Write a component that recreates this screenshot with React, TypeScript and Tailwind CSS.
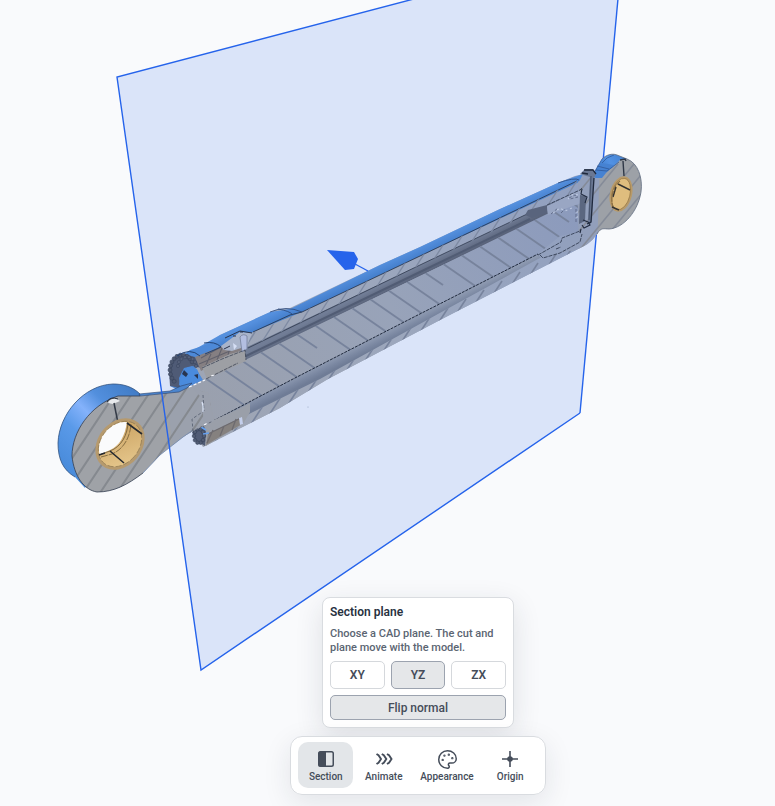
import { useState } from "react";
import type { ReactNode } from "react";
import { Palette } from "lucide-react";
import clsx from "clsx";

const PLANES = ["XY", "YZ", "ZX"];

const range = (count: number) => Array.from({ length: count }, (_, i) => i);

// jagged ring of teeth around the gland nuts
const teeth = (cx: number, cy: number, rx: number, ry: number, count: number) =>
    range(count).map((i) => {
        const a = (i / count) * Math.PI * 2;
        return { x: cx + Math.cos(a) * rx, y: cy + Math.sin(a) * ry };
    });

function SectionIcon() {
    return (
        <svg width="18" height="18" viewBox="0 0 18 18" fill="none">
            <rect x="1.75" y="1.75" width="14.5" height="14.5" rx="1.75" stroke="currentColor" strokeWidth="1.5" />
            <path d="M3 1.5H9V16.5H3A1.5 1.5 0 0 1 1.5 15V3A1.5 1.5 0 0 1 3 1.5Z" fill="currentColor" />
        </svg>
    );
}

function AnimateIcon() {
    return (
        <svg width="18" height="18" viewBox="0 0 18 18" fill="none" stroke="currentColor" strokeWidth="1.9">
            <path d="M1.5 4L3.5 5.3L6 9L3.5 12.7L1.5 14M6.8 4L8.8 5.3L11.3 9L8.8 12.7L6.8 14M12 4L14 5.3L16.5 9L14 12.7L12 14" />
        </svg>
    );
}

function OriginIcon() {
    return (
        <svg width="18" height="18" viewBox="0 0 18 18" fill="none" stroke="currentColor" strokeWidth="1.6">
            <path d="M9 1V17M1 9H17" />
            <circle cx="9" cy="9" r="2.8" fill="currentColor" stroke="none" />
        </svg>
    );
}

function Model() {
    return (
        <svg
            className="col-start-1 row-start-1 h-screen w-full"
            viewBox="0 0 775 806"
            preserveAspectRatio="xMidYMid slice"
            role="img"
            aria-label="Hydraulic cylinder cut by the YZ plane"
        >
            <defs>
                <linearGradient id="eyeBlue" x1="60" y1="460" x2="135" y2="385" gradientUnits="userSpaceOnUse">
                    <stop offset="0" stopColor="#4a8cdb" />
                    <stop offset="0.3" stopColor="#5a9ae9" />
                    <stop offset="0.5" stopColor="#84b2fb" />
                    <stop offset="0.68" stopColor="#528fdd" />
                    <stop offset="1" stopColor="#3f7ac4" />
                </linearGradient>
                <linearGradient id="tubeBlue" x1="390" y1="260" x2="395" y2="271" gradientUnits="userSpaceOnUse">
                    <stop offset="0" stopColor="#5590de" />
                    <stop offset="1" stopColor="#3f79c6" />
                </linearGradient>
                <linearGradient id="rightBlue" x1="598" y1="172" x2="624" y2="155" gradientUnits="userSpaceOnUse">
                    <stop offset="0" stopColor="#3f79c6" />
                    <stop offset="0.5" stopColor="#5292e4" />
                    <stop offset="1" stopColor="#4380cf" />
                </linearGradient>
                <linearGradient id="cut" x1="190" y1="400" x2="590" y2="210" gradientUnits="userSpaceOnUse">
                    <stop offset="0" stopColor="#9aa0ad" />
                    <stop offset="0.5" stopColor="#98a3b9" />
                    <stop offset="1" stopColor="#8b9abd" />
                </linearGradient>
                <linearGradient id="wall" x1="190" y1="400" x2="590" y2="210" gradientUnits="userSpaceOnUse">
                    <stop offset="0" stopColor="#9ea5b4" />
                    <stop offset="0.5" stopColor="#9ca7bd" />
                    <stop offset="1" stopColor="#91a0c0" />
                </linearGradient>
                <linearGradient id="bore" x1="380" y1="286" x2="384" y2="294" gradientUnits="userSpaceOnUse">
                    <stop offset="0" stopColor="#717d96" />
                    <stop offset="1" stopColor="#59637a" />
                </linearGradient>
                <linearGradient id="boreLow" x1="420" y1="314" x2="425" y2="324" gradientUnits="userSpaceOnUse">
                    <stop offset="0" stopColor="#8f9bb2" />
                    <stop offset="0.6" stopColor="#7a87a1" />
                    <stop offset="1" stopColor="#6f7c96" />
                </linearGradient>
                <linearGradient id="bronze" x1="98" y1="430" x2="140" y2="455" gradientUnits="userSpaceOnUse">
                    <stop offset="0" stopColor="#c89f5e" />
                    <stop offset="1" stopColor="#e5c68b" />
                </linearGradient>
                <clipPath id="eyeClip">
                    <path d="M118 396L140 396L157 394L180 391L188 387L208 393L214 421L193 431L183 437L160 455L143 473C127 485 114 492 97 492C84 490 74 476 72 456C72 432 90 405 118 396Z" />
                </clipPath>
                <clipPath id="rodClip">
                    <path d="M190 388L245 360L420 276L547 214L578 204L579 232L560 236L538 254L410 319L293 379L213 421L204 412L202 398Z" />
                </clipPath>
                <clipPath id="topWallClip">
                    <path d="M247 335L302 312L420 256L577 181L584 184L582 196L547 206L420 265L248 348Z" />
                </clipPath>
                <clipPath id="lowWallClip">
                    <path d="M243 417L320 379L447 309L538 259L586 236L585 244L580 248L442 319L328 379L280 408L203 447L206 434Z" />
                </clipPath>
                <clipPath id="rightClip">
                    <path d="M578 182L592 173L600 176L612 168L620 160L627 159C638 163 643 178 641 192C638 211 624 228 609 229C604 229 601 227 597 234C592 242 584 247 575 250L560 252L579 238Z" />
                </clipPath>
                <clipPath id="holeClip">
                    <ellipse cx="120" cy="444" rx="19" ry="24" transform="rotate(40 120 444)" />
                </clipPath>
            </defs>

            {/* Section plane */}
            <path d="M117 77L623 -56L580 413L201 670Z" fill="#dae4f9" />
            <path d="M580 413L623 -56" stroke="#2563eb" strokeWidth="1.4" />

            {/* Tube */}
            <path d="M220 335L275 310L290 308L380 265L420 247L500 209L560 182L575 176L592 172L597 234L580 248L442 319L328 379L280 408L203 447L193 432L213 421L190 388L172 372Z" fill="url(#wall)" />
            <path d="M190 352L220 335L270 312L290 309L380 265L420 247L500 209L560 182L583 174L579 182L420 256L302 312L253 332L232 346L200 360Z" fill="url(#tubeBlue)" />
            <path d="M302 312L420 256L577 181M253 332L290 315L302 312" stroke="#252f42" strokeWidth="0.8" fill="none" />
            <path d="M270 312Q286 305 302 312M278 309Q290 311 293 315" stroke="#2b477a" strokeWidth="0.8" fill="none" />
            <path d="M558 183Q575 177 579 180" stroke="#2b477a" strokeWidth="0.8" fill="none" />

            <path d="M245 348L420 265L525 215L547 206L548 215L420 276L245 361Z" fill="url(#bore)" />
            <path d="M248 348L420 265L525 215L547 206L580 191" stroke="#303a4e" strokeWidth="0.8" fill="none" />
            <path d="M244 357L420 272L530 219" stroke="#515c74" strokeWidth="2" fill="none" />
            <path d="M213 421L293 379L410 319L538 254L543 260L447 311L320 381L243 419L206 434Z" fill="url(#boreLow)" />

            <g clipPath="url(#topWallClip)" stroke="#7e8aa3" strokeWidth="1.4">
                {range(19).map((i) => (
                    <path key={i} d={`M${236 + i * 19} ${362 - i * 9}l24 -38`} />
                ))}
            </g>
            <g clipPath="url(#lowWallClip)">
                <rect x="190" y="230" width="410" height="225" fill="url(#wall)" />
                <g stroke="#77839d" strokeWidth="1.6">
                    {range(21).map((i) => (
                        <path key={i} d={`M${206 + i * 18} ${456 - i * 9}l26 -40`} />
                    ))}
                </g>
            </g>

            {/* Rod */}
            <g clipPath="url(#rodClip)">
                <rect x="180" y="190" width="410" height="240" fill="url(#cut)" />
                <g stroke="#77839c" strokeWidth="1.9">
                    {range(21).map((i) => (
                        <path key={i} d={`M${205 + i * 18} ${378 - i * 9}l${i % 7 === 5 ? 22 : 42} ${i % 7 === 5 ? 15 : 29}`} />
                    ))}
                </g>
            </g>
            <path d="M213 421L293 379L410 319L538 254" stroke="#202a3d" strokeWidth="1" strokeDasharray="3 1" fill="none" />

            {/* Right eye */}
            <path d="M590 176L595 171L602 159C606 155 612 153 617 155L627 159L620 162L608 173L602 178Z" fill="url(#rightBlue)" />
            <g clipPath="url(#rightClip)">
                <rect x="540" y="150" width="110" height="110" fill="#9da1a7" />
                <path d="M540 150H600L597 260H540Z" fill="#929fbb" />
                <g stroke="#858b98" strokeWidth="1.6">
                    {range(8).map((i) => (
                        <path key={i} d={`M${530 + i * 16} 252l72 -88`} />
                    ))}
                </g>
            </g>
            <path d="M590 176L595 171L602 163L614 165L606 173L602 178L596 178Z" fill="#4682d2" />
            <path d="M595 171L602 159M602 163Q606 157 614 155M596 170L607 171L619 162M597 166L609 169" stroke="#2c5391" strokeWidth="0.7" fill="none" />
            <path d="M602 159C606 155 612 153 617 155L627 159C638 163 643 178 641 192C638 211 624 228 609 229C604 229 601 227 597 234" stroke="#5f6b7f" strokeWidth="0.8" fill="none" />
            <path d="M580 174L585 169L593 169L596 174L594 178L592 220L590 225L588 224L590 177Z" fill="#6a7894" />
            <path d="M584 170L593 170L596 174M582 173L588 174M594 178L591 222L587 224" stroke="#202a3e" strokeWidth="1.3" fill="none" />
            <path d="M591 176L589 220" stroke="#4a566f" strokeWidth="1.2" fill="none" />
            <path d="M620 160L625 159L626 161M623 161L624 176" stroke="#2f3847" strokeWidth="1.4" fill="none" />
            <ellipse cx="621" cy="194" rx="11" ry="18" transform="rotate(14 621 194)" fill="#b89a69" />
            <ellipse cx="621" cy="194" rx="9" ry="16" transform="rotate(14 621 194)" fill="#dfbd7e" stroke="#937544" strokeWidth="0.7" />
            <path d="M620 181C613 186 610 199 613 207" stroke="#8d7144" strokeWidth="1.3" strokeDasharray="5 1" fill="none" />
            <path d="M618 184L630 190M612 207L619 210M616 187L613 197" stroke="#343331" strokeWidth="1.4" fill="none" />

            {/* Piston and nut */}
            <path d="M547 206L580 190L581 203L548 215Z" fill="#99a6c3" />
            <path d="M525 215L528 210L547 205L547 213L532 218Z" fill="#59647d" />
            <path d="M538 255L561 242L562 238L580 231L580 242L560 253L543 258Z" fill="#92a0bd" />
            <path d="M547 205L580 190L582 188M538 255L561 242L562 238L580 231M540 255L543 258L560 253L580 242L582 234M556 249L561 247" stroke="#2a3347" strokeWidth="0.8" strokeDasharray="4 1" fill="none" />
            <path d="M580 195L586 196L585 221L579 224Z" fill="#5b6780" />
            <path d="M582 189L581 194L587 197L585 203M583 220L588 222L590 225L584 228L582 225M581 229L580 233" stroke="#202a3e" strokeWidth="1.1" fill="none" />
            <path d="M553 213L560 208L565 211L574 207M568 199L573 194L579 195M577 211V219" stroke="#bcc8e0" strokeWidth="1.2" strokeDasharray="2 3" fill="none" />
            <path d="M551 214L558 208M561 213L565 209M569 198L575 195L578 197L570 199M576 209V222" stroke="#55617d" strokeWidth="0.8" strokeDasharray="3 2" fill="none" />

            {/* Gland and knurled collar */}
            <path d="M175 360L186 353L190 350L212 343L221 347L202 355L193 364L203 380L180 391L170 386Z" fill="#4d89d8" />
            <path d="M169 369L174 358L184 354L195 357L202 368L192 366L184 368L179 378L180 388L170 386Z" fill="#4f5b76" />
            {teeth(182, 370, 12, 15, 22)
                .filter((p) => p.x < 193 && p.y < 382)
                .map((p, i) => (
                    <circle key={i} cx={p.x} cy={p.y} r="2" fill="#4d5870" stroke="#36415a" strokeWidth="0.6" />
                ))}
            {teeth(187, 366, 9, 9, 14)
                .filter((p) => p.y < 368)
                .map((p, i) => (
                    <circle key={i} cx={p.x} cy={p.y} r="1.6" fill="#56617a" stroke="#3b4660" strokeWidth="0.6" />
                ))}
            <path d="M179 385L182 372L188 367L197 369L201 379L190 384Z" fill="#4a8bdd" />
            <path d="M182 374L184 370L188 374L186 377ZM194 375L198 374L198 379Z" fill="#28354f" />
            <path d="M195 357L222 346L240 338L242 350L201 371Z" fill="#857f82" />
            <path d="M199 364L244 345M201 358L221 347M205 367L211 354M217 360L222 348M228 355L231 344" stroke="#62626d" strokeWidth="1.1" fill="none" />
            <path d="M202 367L230 354L245 350L246 361L207 379Z" fill="#9d9fa4" />
            <path d="M221 346L240 332L252 333L247 346L232 351L224 350Z" fill="#a9b4ca" />
            <path d="M240 337Q243 333 247 336L247 349L242 352Z" fill="#b3bee0" stroke="#6c7792" strokeWidth="0.7" />
            <path d="M233 343L237 346L234 350Z" fill="#d5def4" />
            <path d="M233 336H236M240 332H243M224 349L230 346M225 338L240 331L252 333" stroke="#29334a" strokeWidth="1" fill="none" />
            <path d="M177 356Q190 347 200 356M204 343Q215 341 221 347L205 354" stroke="#234374" strokeWidth="1" fill="none" />
            <path d="M202 368L222 359L245 350L246 360M206 379L238 363" stroke="#3c4456" strokeWidth="0.8" strokeDasharray="4 1" fill="none" />

            <path d="M193 431L205 424L236 410L250 403L250 412L243 424L206 446L198 441Z" fill="#9a9fa9" />
            <path d="M208 434L240 418L242 424L206 445Z" fill="#85817f" />
            <path d="M207 443L213 430M220 436L224 426M232 430L236 419M208 434L241 418" stroke="#6d6b70" strokeWidth="1.3" />
            <path d="M192 432L196 429L204 426L206 432L205 446L200 443L195 440Z" fill="#515c76" />
            {teeth(199, 436, 5, 7, 10).map((p, i) => (
                <circle key={i} cx={p.x} cy={p.y} r="1.8" fill="#515c74" stroke="#364159" strokeWidth="0.6" />
            ))}
            <path d="M201 427L206 430M203 434L209 433" stroke="#65a0ee" strokeWidth="1.5" />
            <path d="M239 418L242 417L243 424L240 425Z" fill="#c4cfec" />

            {/* Left eye */}
            <path d="M140 396L140 394C132 386 122 384 113 384C84 385 59 414 58 443C58 459 63 470 75 477L85 488L120 430Z" fill="url(#eyeBlue)" />
            <path d="M140 394C132 386 122 384 113 384C84 385 59 414 58 443C58 459 63 470 75 477" stroke="#33537f" strokeWidth="0.8" fill="none" />
            <g clipPath="url(#eyeClip)">
                <rect x="55" y="370" width="165" height="130" fill="#9fa2a7" />
                <path d="M163 370H220V470H176Z" fill="#9ba1ad" />
                <g stroke="#85898f" strokeWidth="2">
                    {range(10).map((i) => (
                        <path key={i} d={`M${43 + i * 17} 502l81 -122`} />
                    ))}
                </g>
                <path d="M190 386H220V430H204L202 398Z" fill="#9aa0ad" />
            </g>
            <path d="M139 394L170 391L181 386L192 383L187 388L179 392L140 396Z" fill="#4b85ce" stroke="#2a4068" strokeWidth="0.6" />
            <path d="M140 396L118 396C90 405 72 432 72 456C74 476 84 490 97 492C114 492 127 485 143 473" stroke="#343e50" strokeWidth="0.8" fill="none" />
            <path d="M143 473L160 455L183 437L193 430" stroke="#7289ae" strokeWidth="0.8" fill="none" />
            <path d="M203 395L204 411L192 419L193 431L213 421" stroke="#525b6c" strokeWidth="0.8" strokeDasharray="3 2" fill="none" />
            <path d="M202 402L203 406L203 412" stroke="#dbe4f7" strokeWidth="1.2" fill="none" />
            <path d="M189 387L205 380M211 376L214 375M204 425L208 423" stroke="#f5f7fd" strokeWidth="1.3" strokeDasharray="3 2" />
            <path d="M108 403Q110 398 117 399L120 401L113 404Z" fill="#e8eaed" />
            <path d="M107 402Q110 396 118 399" stroke="#282f3c" strokeWidth="1" fill="none" />
            <path d="M114 403L118 423" stroke="#343b47" strokeWidth="1.5" fill="none" />
            <ellipse cx="120" cy="444" rx="22" ry="28" transform="rotate(40 120 444)" fill="#b69a6e" />
            <ellipse cx="120" cy="444" rx="19" ry="25" transform="rotate(40 120 444)" fill="url(#bronze)" />
            <g clipPath="url(#holeClip)">
                <path d="M92 456L101 454L110 450C120 446 126 434 127 420L110 410L88 430Z" fill="#fafbfc" />
                <path d="M99 455L110 451C121 447 128 435 128 421" stroke="#6b5735" strokeWidth="0.8" fill="none" />
                <path d="M101 457L112 454C124 449 130 437 131 424" stroke="#7d653b" strokeWidth="0.9" strokeDasharray="7 1" fill="none" />
            </g>
            <ellipse cx="120" cy="444" rx="19" ry="25" transform="rotate(40 120 444)" stroke="#907950" strokeWidth="0.7" strokeDasharray="6 2" fill="none" />
            <path d="M127 423L142 434M110 451L124 463M99 455L105 453" stroke="#262a30" strokeWidth="1.6" />

            {/* Plane outline in front of the model */}
            <path d="M623 -56L117 77L201 670L580 413" stroke="#2563eb" strokeWidth="1.4" fill="none" />

            {/* Plane normal */}
            <path d="M355 264L368 271" stroke="#2563eb" strokeWidth="1.3" />
            <path d="M327 250L354 252L358 259L354 269L345 270Z" fill="#2563eb" />
            <circle cx="308" cy="407" r="0.5" fill="#8b9ab7" />
        </svg>
    );
}

function SectionPanel() {
    const [plane, setPlane] = useState("YZ");
    const [flipped, setFlipped] = useState(true);

    return (
        <section className="w-48 rounded-lg border border-[#d9dce0] bg-white p-[7px] shadow-[0_8px_28px_rgba(30,41,59,0.12)]">
            <h2 className="text-[12px] leading-[14px] font-semibold text-[#29323f]">Section plane</h2>
            <p className="mt-2 text-[11px] leading-[14px] font-medium text-[#5b6572]">
                Choose a CAD plane. The cut and plane move with the model.
            </p>
            <div className="mt-[6px] grid grid-cols-3 gap-[6px]">
                {PLANES.map((name) => (
                    <button
                        key={name}
                        type="button"
                        aria-pressed={plane === name}
                        onClick={() => setPlane(name)}
                        className={clsx(
                            "h-7 rounded-[5px] border text-[12px] font-semibold text-[#454d5a]",
                            plane === name ? "border-[#9ca3af] bg-[#e5e7e9]" : "border-[#d5d8dc] bg-white",
                        )}
                    >
                        {name}
                    </button>
                ))}
            </div>
            <button
                type="button"
                aria-pressed={flipped}
                onClick={() => setFlipped(!flipped)}
                className={clsx(
                    "mt-[6px] h-[25px] w-full rounded-[5px] border text-[12px] font-medium text-[#454d5a]",
                    flipped ? "border-[#9ca3af] bg-[#e5e7e9]" : "border-[#d5d8dc] bg-white",
                )}
            >
                Flip normal
            </button>
        </section>
    );
}

type ToolButtonProps = {
    label: string;
    active: boolean;
    onClick: () => void;
    children: ReactNode;
};

function ToolButton({ label, active, onClick, children }: ToolButtonProps) {
    return (
        <button
            type="button"
            aria-pressed={active}
            onClick={onClick}
            className={clsx(
                "flex h-[46px] min-w-[55px] flex-col items-center gap-[3px] rounded-[10px] px-[6px] pt-2 text-[#454d5a]",
                active && "bg-[#e3e6e9]",
            )}
        >
            <span className="flex h-[18px] items-center">{children}</span>
            <span className="text-[10px] leading-[12px] font-medium">{label}</span>
        </button>
    );
}

function App() {
    const [tool, setTool] = useState("Section");

    const tools = [
        { label: "Section", icon: <SectionIcon /> },
        { label: "Animate", icon: <AnimateIcon /> },
        { label: "Appearance", icon: <Palette size={21} strokeWidth={1.7} /> },
        { label: "Origin", icon: <OriginIcon /> },
    ];

    return (
        <main className="grid min-h-screen w-full overflow-hidden bg-[#f9fafc] font-['Roboto',sans-serif]">
            <Model />
            <div className="z-10 col-start-1 row-start-1 flex flex-col items-center justify-end gap-2 pb-[11px] pl-[61px]">
                {tool === "Section" && <SectionPanel />}
                <nav
                    aria-label="Viewer tools"
                    className="flex gap-[3px] rounded-xl border border-[#d9dce0] bg-white/95 px-[7px] pt-[5px] pb-[6px] shadow-[0_8px_28px_rgba(30,41,59,0.10)]"
                >
                    {tools.map(({ label, icon }) => (
                        <ToolButton key={label} label={label} active={tool === label} onClick={() => setTool(label)}>
                            {icon}
                        </ToolButton>
                    ))}
                </nav>
            </div>
        </main>
    );
}

export default App;
